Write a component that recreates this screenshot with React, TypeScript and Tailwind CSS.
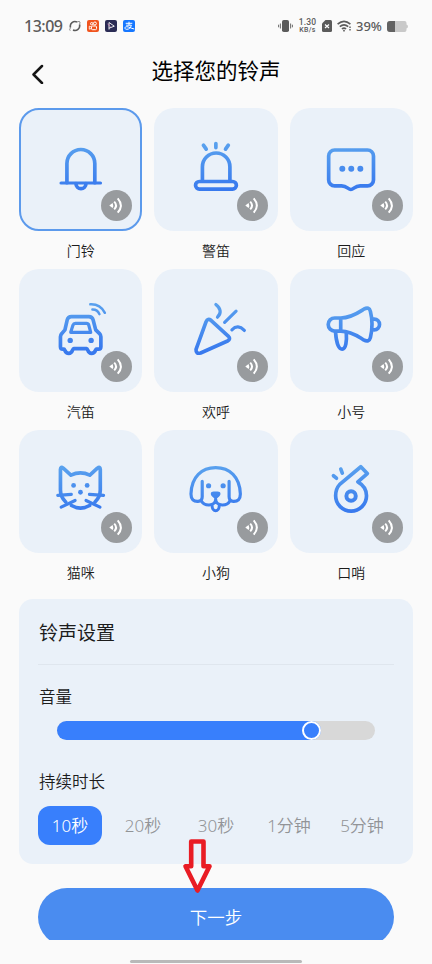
import type { ReactNode } from 'react';

const FONT = "font-['Noto_Sans','Noto_Sans_CJK_SC',sans-serif]";

const BellIcon = () => (
  <>
    <path d="M47.7 75V55.7a14 14 0 0 1 28 0V75" />
    <path d="M41.8 75.3H81.4" strokeWidth={3.2} />
    <path d="M56.8 76a5 5 0 0 0 10 0" />
  </>
);

const SirenIcon = () => (
  <>
    <path d="M48.2 73V59a13.8 13.8 0 0 1 27.6 0v14" />
    <rect x={41.3} y={73.8} width={41} height={7.6} rx={3.8} />
    <path d="M61.7 35.7v4M49.2 37.3l2.8 4M74.2 37.3l-2.8 4" />
  </>
);

const ReplyIcon = () => (
  <g transform="translate(-1 0)">
    <path d="M45.4 42.2h33a6 6 0 0 1 6 6v24a6 6 0 0 1-6 6H71c-5.500 0-6.500 3.600-9.300 3.600s-3.800-3.600-9.300-3.600h-7a6 6 0 0 1-6-6v-24a6 6 0 0 1 6-6z" />
    <g fill="url(#blue)" stroke="none">
      <circle cx={53.1} cy={61} r={3} />
      <circle cx={62.1} cy={61} r={3} />
      <circle cx={71.2} cy={61} r={3} />
    </g>
  </g>
);

const CarIcon = () => (
  <>
    <path d="M52.500 47.800h17.500q3.500 0 4.300 3.300l2.600 10 3.900 3.800q1.300 1.300 1.300 3.200v10q0 2.400-2.400 2.400h-2.200c-1 0-.7 4.300-4.800 4.300s-3.400-4.800-4.900-4.800h-13c-1.500 0-.8 4.800-4.900 4.800s-3.800-4.300-4.800-4.300h-1.200q-2.400 0-2.400-2.400v-10q0-1.900 1.300-3.200l3.200-3.800 2.300-10q.8-3.300 4.200-3.300z" transform="translate(-.3 0)" />
    <path d="M56.200 54.600h11.200q1.700 0 2.200 1.700l2 7.300H51.500l2.300-7.300q.6-1.700 2.400-1.700z" strokeWidth={3.200} />
    <path d="M71.200 35.500q9.800-.5 14.600 8.500M73.300 40.600q5-.2 7 4.700" strokeWidth={2.500} />
    <g fill="url(#blue)" stroke="none">
      <circle cx={51} cy={71.700} r={2.700} />
      <circle cx={72} cy={71.700} r={2.700} />
    </g>
  </>
);

const PartyIcon = () => (
  <>
    <path d="M51.900 52.900q1.700-3.800 4.900-1.400l17.300 15.800q3 3.100-.7 5l-27 12q-4.900 1.300-4.600-3.600z" />
    <path d="M61.700 35.700q7.800 6.300 1.600 12.700M70.500 53.500l11.500-11.100M77.800 61q6-6 12.500.7" strokeWidth={3.200} />
  </>
);

const HornIcon = () => (
  <g transform="translate(-.5 0)">
    <path d="M51 49.200h-6a6.500 6.500 0 0 0 0 13.100h6M51 49.200v13.100M51 49.200c10.500 0 18-5.500 23.200-8.800q5.400-2.900 6.600 2.200 3.300 13 0 26.300-1.300 5.200-6.800 2.300C68.500 67.800 62 62.300 51 62.300" />
    <path d="M45.800 63.500c.6 9 2.700 17 6.600 17s4.800-8.500 4.200-16.700" />
    <path d="M83.600 50.400c8.500-1.200 8.500 11.800 0 10.600" />
  </g>
);

const CatIcon = () => (
  <>
    <path d="M46.500 72.300q-5.300-5-5.300-12V39.600q.3-3.200 2.800-1.300l7.700 7q9.600-4.600 19 0l7.600-7q2.700-1.900 2.900 1.300v20.700q0 7-5.300 12M52.300 75.800q9 5.200 18.200 0" />
    <path d="M38.500 65.700l13.600-1M84.500 65.700l-14.200-1M41.900 77.500l14-6.700M80.900 77.500l-14-6.700" strokeWidth={3.200} />
    <g fill="url(#blue)" stroke="none">
      <circle cx={54.400} cy={55.700} r={2.400} />
      <circle cx={68} cy={55.700} r={2.400} />
      <circle cx={61.300} cy={62.500} r={2.400} />
    </g>
  </>
);

const DogIcon = () => (
  <>
    <path d="M48 51.500v15.500q0 4.500-4.300 4.700c-4.200.2-7-1.900-7-7.500C37.200 47 47.500 37.800 61.500 37.800S85.800 47 86.300 64.200c0 5.600-2.800 7.700-7 7.500Q75 71.500 75 67V51.500" strokeWidth={3.200} />
    <path d="M47 71q2.500 4.500 8 4.300 6.500-.3 6.500-6 0 5.700 6.500 6 5.500.2 8-4.300M57.900 75.800c0 7 7.200 7 7.200 0" strokeWidth={3} />
    <g fill="url(#blue)" stroke="none">
      <path d="M59.500 61.800h4c3.500 0 3.500 3.300 1.500 4.900l-2 1.800q-1.500 1.200-3 0l-2-1.800c-2-1.600-2-4.900 1.500-4.900z" />
      <circle cx={54.400} cy={56} r={2.600} />
      <circle cx={69} cy={56} r={2.600} />
    </g>
  </>
);

const WhistleIcon = () => (
  <g transform="translate(-.8 0)">
    <path d="M50.300 54.600l21.200-17.700 6.500 6.800-9.500 8.300c5.300 3 8.700 7.700 8.700 14a15.500 15.500 0 0 1-31 0q0-6.900 4.100-11.400z" />
    <circle cx={61.700} cy={66.300} r={4.700} strokeWidth={4} />
    <path d="M44 45.900l3 2.500M51.400 39.200l1.500 4" />
  </g>
);

const RINGS: { name: string; icon: ReactNode }[] = [
  { name: '门铃', icon: <BellIcon /> },
  { name: '警笛', icon: <SirenIcon /> },
  { name: '回应', icon: <ReplyIcon /> },
  { name: '汽笛', icon: <CarIcon /> },
  { name: '欢呼', icon: <PartyIcon /> },
  { name: '小号', icon: <HornIcon /> },
  { name: '猫咪', icon: <CatIcon /> },
  { name: '小狗', icon: <DogIcon /> },
  { name: '口哨', icon: <WhistleIcon /> },
];

const DURATIONS = ['10秒', '20秒', '30秒', '1分钟', '5分钟'];

function StatusBar() {
  return (
    <div className="flex h-[50px] items-center justify-between pl-[24px] pr-[24px] pt-[2px] text-[#5b5b5b]">
      <div className="flex items-center">
        <span className="w-[45px] font-['Noto_Sans'] text-[16px] font-medium leading-none tracking-[-0.5px]">13:09</span>
        <svg className="h-3 w-3" viewBox="0 0 12 12" fill="none" stroke="currentColor">
          <path d="M1.500 7.500A4.700 4.700 0 0 1 8 2M10.500 4.500A4.700 4.700 0 0 1 4 10" strokeWidth={1.600} />
          <path d="M1.500 7.500Q0 10.300 1.200 10.700M8 2q2.800-1.300 3 0 0 1-.5 2.500" strokeWidth={0.700} />
        </svg>
        <svg className="ml-[6px] h-3 w-3" viewBox="0 0 12 12" fill="none" stroke="white">
          <rect width={12} height={12} rx={2} fill="#f0541e" stroke="none" />
          <rect x={4.500} y={6} width={5} height={3.700} rx={1} />
          <circle cx={4.700} cy={3.700} r={1.200} />
          <circle cx={7.900} cy={3.500} r={1.500} />
          <path d="M4.500 7L2.300 6.200v3l2.200-.8" strokeWidth={0.800} />
        </svg>
        <svg className="ml-[6px] h-3 w-3" viewBox="0 0 12 12" fill="none" stroke="white">
          <rect width={12} height={12} rx={2} fill="#2b2c55" stroke="none" />
          <path d="M4 9.500v-7l5.300 3.700L4 8.200" strokeWidth={0.900} />
          <path d="M2.500 4l3 2.500" stroke="#e58ac0" strokeWidth={0.700} />
        </svg>
        <svg className="ml-[6px] h-3 w-3" viewBox="0 0 12 12" fill="none" stroke="white">
          <rect width={12} height={12} rx={2} fill="#1677ff" stroke="none" />
          <path d="M2.700 3.300h6.600M6 1.700v3.500M3.200 5.200h5.200Q7.300 9.300 3.800 9.300c-2.600 0-2.500-2.600 0-2.600 2 0 4 1.600 7.500 2.300" />
        </svg>
      </div>
      <div className="flex items-center">
        <svg className="h-[14px] w-[15px]" viewBox="0 0 15 14" fill="none" stroke="currentColor">
          <rect x={4} y={1} width={7} height={12} rx={1.800} fill="currentColor" stroke="none" />
          <path d="M2.400 4.500v5M.600 5.700v2.600M12.600 4.500v5M14.400 5.700v2.600" strokeWidth={0.900} />
        </svg>
        <span className="ml-[5px] flex w-[19px] flex-col items-center whitespace-nowrap font-['Roboto'] font-medium">
          <span className="text-[8.500px] leading-[8px] tracking-[0.200px]">1.30</span>
          <span className="text-[7px] leading-[8px] tracking-[0.300px]">KB/s</span>
        </span>
        <svg className="ml-[5px] h-3 w-[10px]" viewBox="0 0 10 12">
          <path d="M3.500 0H8.500Q10 0 10 1.500v9Q10 12 8.500 12h-7Q0 12 0 10.500V3.500z" fill="currentColor" />
          <path d="M3 4.500l4 3.500M7 4.500L3 8" stroke="white" strokeWidth={1.200} />
        </svg>
        <svg className="ml-[5px] h-3 w-[15px]" viewBox="0 0 15 12" fill="none" stroke="currentColor" strokeWidth={1.600}>
          <path d="M.6 4.200q6.400-5.600 12.800 0M2.800 6.700q4.200-3.600 8.400 0M4.900 9q2.100-1.700 4.200 0" />
          <circle cx={7} cy={10.700} r={0.900} fill="currentColor" stroke="none" />
          <path d="M13 6.500v5" strokeWidth={1.400} strokeDasharray="1.500 1" />
        </svg>
        <span className="ml-[4px] w-[27px] whitespace-nowrap font-['Noto_Sans'] text-[13px] font-medium leading-none">39%</span>
        <svg className="ml-[4px] h-[11px] w-[21px]" viewBox="0 0 21 11">
          <path d="M3 0h14.500q2 0 2 2v1.500q1.500.3 1.500 2t-1.500 2V9q0 2-2 2H3q-3 0-3-3V3q0-3 3-3z" fill="#c9c9c9" />
          <path d="M3 0h5v11H3q-3 0-3-3V3q0-3 3-3z" fill="#626262" />
        </svg>
      </div>
    </div>
  );
}

function RingCard({ name, icon, active }: { name: string; icon: ReactNode; active: boolean }) {
  return (
    <div className="flex h-[161px] flex-col items-center">
      <button className="relative h-[122.500px] w-full rounded-[20px] bg-[#eaf1f9]">
        <svg
          className="h-full w-full"
          viewBox="0 0 123 123"
          fill="none"
          stroke="url(#blue)"
          strokeWidth={3.700}
          strokeLinecap="round"
          strokeLinejoin="round"
        >
          {icon}
        </svg>
        {active && <span className="absolute inset-0 rounded-[20px] border-2 border-[#5c9aec]" />}
        <span className="absolute bottom-[9.500px] right-[10px] h-[31px] w-[31px] rounded-full bg-[#989b9e]">
          <svg viewBox="0 0 31 31" fill="none" stroke="white" strokeWidth={2}>
            <path d="M8.300 15.500l3.300-2.600q1.300 2.600 0 5.200z" fill="white" stroke="none" />
            <path d="M13.200 11.600q3.700 3.900 0 7.800M16.700 8.300q6.300 7.200 0 14.400" />
          </svg>
        </span>
      </button>
      <span className="mt-[10px] text-[14px] font-[350] leading-5 text-[#1c1c1c]">{name}</span>
    </div>
  );
}

export default function App() {
  return (
    <div className={`relative flex h-[964px] w-[432px] flex-col overflow-hidden bg-[#fafafa] ${FONT}`}>
      {/* shared gradient for the ringtone icons */}
      <svg className="absolute h-0 w-0">
        <defs>
          <linearGradient id="blue" gradientUnits="userSpaceOnUse" x1={50} y1={36} x2={56} y2={84}>
            <stop offset="0" stopColor="#5aa2ee" />
            <stop offset="1" stopColor="#3879ee" />
          </linearGradient>
        </defs>
      </svg>

      <StatusBar />

      <header className="grid h-[58px] grid-cols-[60px_1fr_60px] items-start">
        <svg className="ml-[31px] mt-[14px] h-5 w-[14px]" viewBox="0 0 14 20" fill="none" stroke="#151515" strokeWidth={2.500} strokeLinecap="round" strokeLinejoin="round">
          <path d="M11 2L2.500 10.500 11 19" />
        </svg>
        <h1 className="mt-[5px] text-center text-[21.500px] leading-8 text-black">选择您的铃声</h1>
      </header>

      <main className="flex flex-col px-[19px]">
        <div className="grid grid-cols-3 gap-x-3">
          {RINGS.map((ring, i) => (
            <RingCard key={ring.name} name={ring.name} icon={ring.icon} active={i === 0} />
          ))}
        </div>

        <section className="mt-[8px] h-[265px] rounded-[14px] bg-[#eaf1f9] px-[19px]">
          <h2 className="flex h-[66px] items-center border-b border-[#dfe6ee] pl-px pt-[3px] text-[19px] text-[#1c1c1c]">铃声设置</h2>
          <p className="mt-[20px] pl-px text-[16.500px] font-[350] leading-6 text-[#1c1c1c]">音量</p>
          <div className="mx-[19px] mt-[12px] flex h-[19px] items-center rounded-full bg-[#d8d8d8]">
            <div className="flex h-full w-[264px] justify-end rounded-full bg-[#387ffc]">
              <span className="h-[19px] w-[19px] rounded-full border-2 border-white bg-[#387ffc]" />
            </div>
          </div>
          <p className="mt-[30px] pl-px text-[16.500px] font-[350] leading-6 text-[#1c1c1c]">持续时长</p>
          <div className="mt-[12px] flex justify-between">
            {DURATIONS.map((label, i) => (
              <button
                key={label}
                className={`h-[39px] w-16 rounded-[12px] pt-px text-[17px] font-[350] ${i === 0 ? 'bg-[#387ffc] text-white' : 'text-[#929497]'}`}
              >
                {label}
              </button>
            ))}
          </div>
        </section>
      </main>

      {/* the button runs past the bottom of the scroll area */}
      <div className="mt-[24px] h-[52px] overflow-hidden px-[38px]">
        <button className="h-[58px] w-full rounded-full bg-[#4a8cf0] text-[17.500px] font-[350] text-white">下一步</button>
      </div>
      <div className="mx-auto mt-[20px] h-[3px] w-[172px] rounded-full bg-[#b9b9b9]" />

      <svg className="absolute left-[182px] top-[838px] h-[56px] w-[31px]" viewBox="0 0 31 56" fill="none" stroke="#e91c24" strokeWidth={4.600} strokeLinejoin="round">
        <path d="M9.200 3.500h12.300v24.800h6L15.500 52.500 3.500 28.300h5.700z" />
      </svg>
    </div>
  );
}
